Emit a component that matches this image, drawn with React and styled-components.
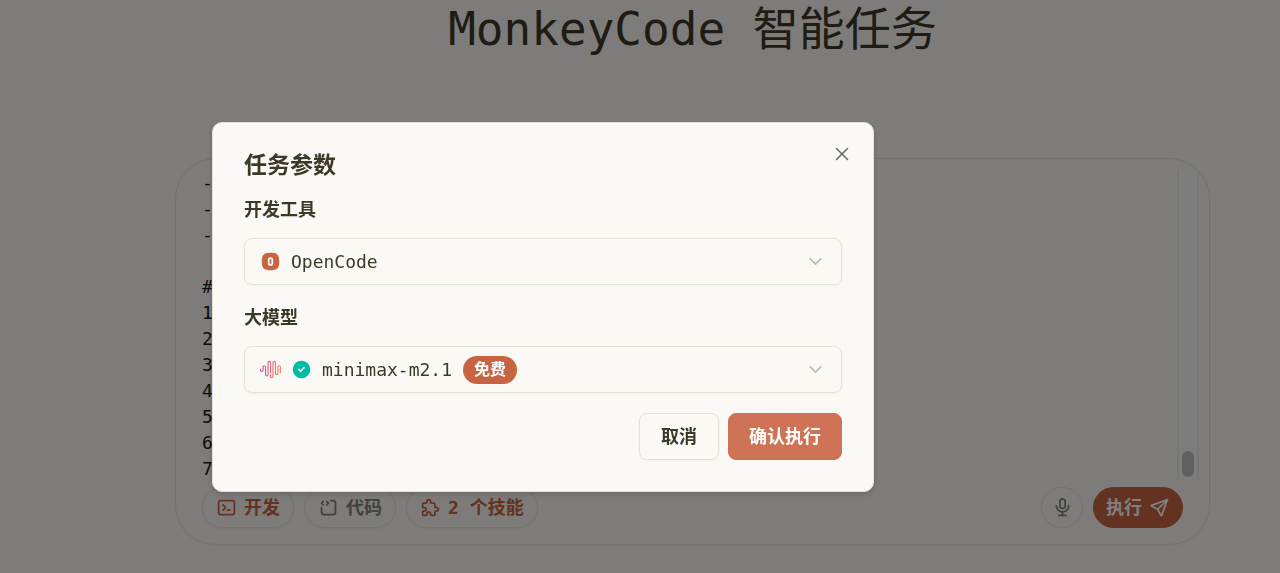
import React, { useState } from 'react';
import styled, { createGlobalStyle, css } from 'styled-components';
import {
  TbTerminal2,
  TbSourceCode,
  TbPuzzle,
  TbMicrophone,
  TbSend,
  TbX,
  TbChevronDown,
  TbCircleCheckFilled,
  TbSquareRoundedNumber0Filled,
} from 'react-icons/tb';

const prompt = ['-', '-', '-', '', '#', '1', '2', '3', '4', '5', '6', '7'].join('\n');

const MiniMaxLogo = () => (
  <svg width="21" height="21" viewBox="0 0 24 24" aria-hidden="true">
    <defs>
      <linearGradient id="minimax" x1="0%" x2="100%" y1="50%" y2="50%">
        <stop offset="0%" stopColor="#d9489b" />
        <stop offset="100%" stopColor="#fb8560" />
      </linearGradient>
    </defs>
    <path
      fill="url(#minimax)"
      d="M16.278 2c1.156 0 2.093.927 2.093 2.07v12.501a.74.74 0 00.744.709.74.74 0 00.743-.709V9.099a2.06 2.06 0 012.071-2.049A2.06 2.06 0 0124 9.1v6.561a.649.649 0 01-.652.645.649.649 0 01-.653-.645V9.1a.762.762 0 00-.766-.758.762.762 0 00-.766.758v7.472a2.037 2.037 0 01-2.048 2.026 2.037 2.037 0 01-2.048-2.026v-12.5a.785.785 0 00-.788-.753.785.785 0 00-.789.752l-.001 15.904A2.037 2.037 0 0113.441 22a2.037 2.037 0 01-2.048-2.026V18.04c0-.356.292-.645.652-.645.36 0 .652.289.652.645v1.934c0 .263.142.506.372.638.23.131.514.131.744 0a.734.734 0 00.372-.638V4.07c0-1.143.937-2.07 2.093-2.07zm-5.674 0c1.156 0 2.093.927 2.093 2.07v11.523a.648.648 0 01-.652.645.648.648 0 01-.652-.645V4.07a.785.785 0 00-.789-.78.785.785 0 00-.789.78v14.013a2.06 2.06 0 01-2.07 2.048 2.06 2.06 0 01-2.071-2.048V9.1a.762.762 0 00-.766-.758.762.762 0 00-.766.758v3.8a2.06 2.06 0 01-2.071 2.049A2.06 2.06 0 010 12.9v-1.378c0-.357.292-.646.652-.646.36 0 .653.29.653.646V12.9c0 .418.343.757.766.757s.766-.339.766-.757V9.099a2.06 2.06 0 012.07-2.048 2.06 2.06 0 012.071 2.048v8.984c0 .419.343.758.767.758.423 0 .766-.339.766-.758V4.07c0-1.143.937-2.07 2.093-2.07z"
    />
  </svg>
);

const TaskDialog = ({ onClose }) => (
  <Overlay>
    <Dialog role="dialog" aria-modal="true" aria-labelledby="dialog-title">
      <DialogTitle id="dialog-title">任务参数</DialogTitle>
      <CloseButton type="button" aria-label="关闭" onClick={onClose}>
        <TbX />
      </CloseButton>
      <Field>
        <Label htmlFor="tool">开发工具</Label>
        <SelectBox>
          <Glyph color="#c96442"><TbSquareRoundedNumber0Filled /></Glyph>
          <Select id="tool" defaultValue="opencode">
            <option value="opencode">OpenCode</option>
          </Select>
          <Chevron />
        </SelectBox>
      </Field>
      <Field>
        <Label htmlFor="model">大模型</Label>
        <SelectBox>
          <MiniMaxLogo />
          <Glyph color="#00bba7"><TbCircleCheckFilled /></Glyph>
          <Select id="model" defaultValue="m21">
            <option value="m21">minimax-m2.1</option>
          </Select>
          <Badge>免费</Badge>
          <Chevron />
        </SelectBox>
      </Field>
      <DialogFooter>
        <DialogButton type="button" onClick={onClose}>取消</DialogButton>
        <DialogButton type="button" $primary onClick={onClose}>确认执行</DialogButton>
      </DialogFooter>
    </Dialog>
  </Overlay>
);

const App = () => {
  const [open, setOpen] = useState(true);

  return (
    <>
      <GlobalStyle />
      <Page>
        <PageTitle>MonkeyCode 智能任务</PageTitle>
        <Composer>
          <Editor>
            <Prompt aria-label="任务描述" defaultValue={prompt} />
            <ScrollTrack>
              <ScrollThumb />
            </ScrollTrack>
          </Editor>
          <Toolbar>
            <Pill type="button" $accent><TbTerminal2 />开发</Pill>
            <Pill type="button"><TbSourceCode />代码</Pill>
            <Pill type="button" $accent><TbPuzzle />2 个技能</Pill>
            <Spacer />
            <MicButton type="button" aria-label="语音输入"><TbMicrophone /></MicButton>
            <RunButton type="button" onClick={() => setOpen(true)}>执行<TbSend /></RunButton>
          </Toolbar>
        </Composer>
      </Page>
      {open && <TaskDialog onClose={() => setOpen(false)} />}
    </>
  );
};

export default App;

const GlobalStyle = createGlobalStyle`
  * {
    box-sizing: border-box;
  }
  body {
    margin: 0;
    background: #faf9f5;
    color: #3d3929;
    font-family: 'DejaVu Sans Mono', 'Noto Sans CJK SC', monospace;
    font-size: 18px;
  }
  button, select, textarea {
    font: inherit;
    color: inherit;
  }
  button {
    cursor: pointer;
  }
`;

const Page = styled.main`
  min-height: 100vh;
  padding: 0 70px 28px 175px;
`;

const PageTitle = styled.h1`
  margin: 0 0 100px;
  font-size: 46px;
  font-weight: 400;
  line-height: 58px;
  text-align: center;
`;

const Composer = styled.section`
  padding: 11px 10px 16px;
  border: 1px solid #e4e2da;
  border-radius: 41px;
  box-shadow: 0 1px 3px #0000000d;
`;

const Editor = styled.div`
  display: flex;
  height: 310px;
`;

const Prompt = styled.textarea`
  flex: 1;
  min-width: 0;
  padding: 0 16px;
  border: 0;
  outline: 0;
  resize: none;
  overflow: hidden;
  background: none;
  color: #1c1a12;
  line-height: 26px;
`;

const ScrollTrack = styled.div`
  display: flex;
  align-items: flex-end;
  justify-content: center;
  width: 22px;
  padding-bottom: 3px;
  border: solid #efefec;
  border-width: 0 2px;
  background: #fafafa;
`;

const ScrollThumb = styled.div`
  width: 12px;
  height: 26px;
  border-radius: 6px;
  background: #c1c1c1;
`;

const Toolbar = styled.div`
  display: flex;
  align-items: center;
  gap: 10px;
  padding: 7px 16px 0;
`;

const Spacer = styled.div`
  flex: 1;
`;

const Pill = styled.button`
  display: flex;
  align-items: center;
  gap: 7px;
  height: 41px;
  padding: 0 13px;
  border: 1px solid #e4e2da;
  border-radius: 21px;
  background: none;
  box-shadow: 0 1px 3px #0000000d;
  color: ${props => props.$accent ? '#c96442' : '#83827d'};
  font-weight: 600;
  line-height: 24px;
  white-space: nowrap;

  > svg {
    width: 21px;
    height: 21px;
  }
`;

const MicButton = styled(Pill)`
  justify-content: center;
  width: 42px;
  padding: 0;
  box-shadow: none;
`;

const RunButton = styled(Pill)`
  padding: 0 12px;
  border-color: #c96442;
  background: #c96442;
  box-shadow: none;
  color: #fff;
`;

const Overlay = styled.div`
  position: fixed;
  inset: 0;
  display: flex;
  align-items: flex-start;
  justify-content: center;
  padding: 122px 194px 20px 0;
  background: #00000080;
`;

const Dialog = styled.div`
  position: relative;
  display: flex;
  flex-direction: column;
  gap: 20px;
  width: 100%;
  max-width: 662px;
  padding: 31px;
  border: 1px solid #e4e2da;
  border-radius: 10px;
  background: #faf9f5;
  box-shadow: 0 1px 4px #0000001a, 0 3px 8px #0000001a;
`;

const DialogTitle = styled.h2`
  margin: 0;
  font-size: 23px;
  font-weight: 600;
  line-height: 23px;
`;

const CloseButton = styled.button`
  position: absolute;
  top: 20px;
  right: 20px;
  display: flex;
  padding: 0;
  border: 0;
  background: none;
  color: #6e6b5e;

  > svg {
    width: 22px;
    height: 22px;
    stroke-width: 1.7;
  }
`;

const Field = styled.div`
  display: flex;
  flex-direction: column;
  gap: 15px;
`;

const Label = styled.label`
  font-weight: 600;
  line-height: 26px;
`;

const SelectBox = styled.div`
  display: flex;
  align-items: center;
  gap: 10px;
  height: 47px;
  padding: 0 15px;
  border: 1px solid #e4e2da;
  border-radius: 8px;
  box-shadow: 0 1px 3px #0000000d;
`;

const Glyph = styled.span`
  display: flex;
  color: ${props => props.color};

  > svg {
    width: 21px;
    height: 21px;
  }
`;

const Select = styled.select`
  appearance: none;
  padding: 0;
  border: 0;
  outline: 0;
  background: none;
`;

const Badge = styled.span`
  padding: 0 11px;
  border-radius: 14px;
  background: #c96442;
  color: #fff;
  font-size: 16px;
  font-weight: 600;
  line-height: 28px;
`;

const Chevron = styled(TbChevronDown)`
  width: 21px;
  height: 21px;
  margin-left: auto;
  color: #bdbbb3;
`;

const DialogFooter = styled.div`
  display: flex;
  justify-content: flex-end;
  gap: 9px;
`;

const DialogButton = styled.button`
  height: 47px;
  padding: 0 21px;
  border: 1px solid #e4e2da;
  border-radius: 8px;
  background: #faf9f5;
  box-shadow: 0 1px 3px #0000000d;
  font-weight: 600;
  line-height: 24px;

  ${props => props.$primary && css`
    padding: 0 20px;
    border-color: #ce7355;
    background: #ce7355;
    box-shadow: none;
    color: #fff;
  `}
`;
